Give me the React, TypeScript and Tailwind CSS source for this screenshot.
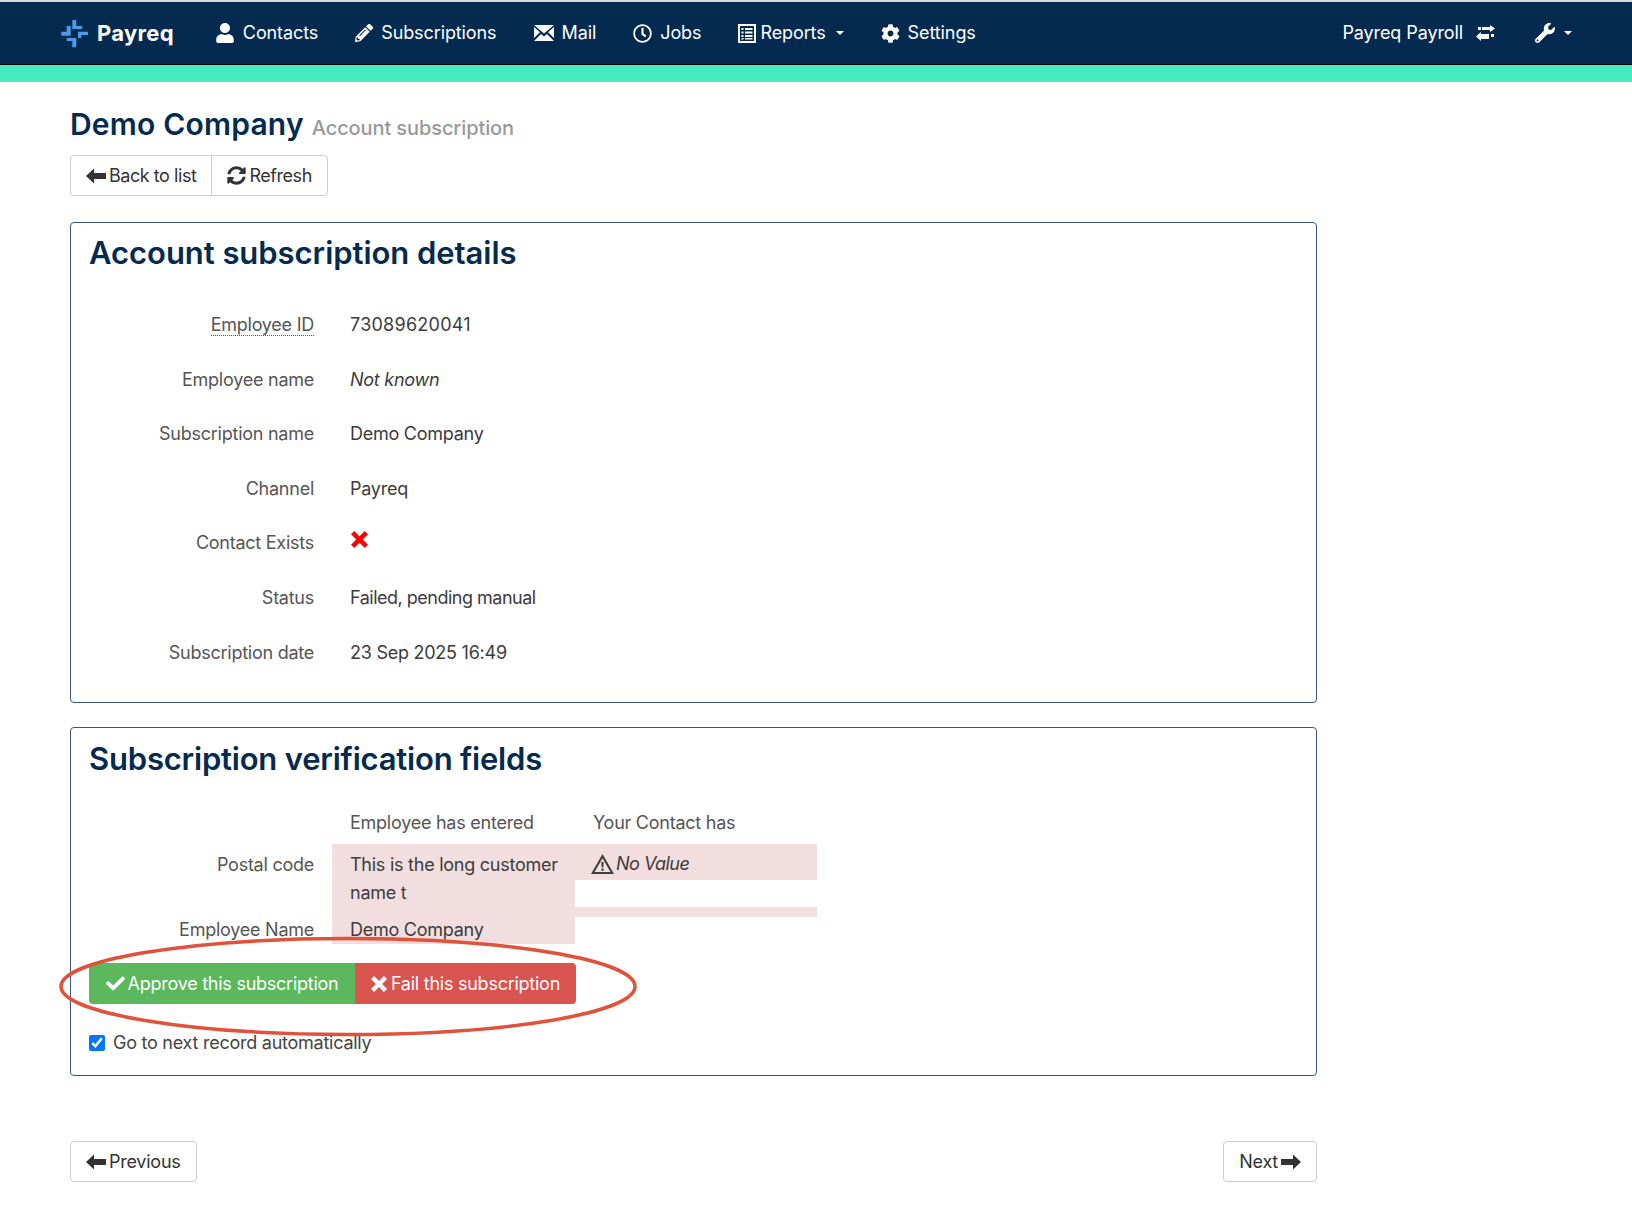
import { FaUser, FaPencilAlt, FaRegClock, FaCog, FaWrench, FaSyncAlt, FaCheck } from "react-icons/fa";

const font = { fontFamily: "Inter, 'Noto Sans', sans-serif" };

function Logo() {
  return (
    <svg width="28" height="29" viewBox="7 4 28 29" fill="#4b9be6">
      <path d="M18.300 5h4v6h6v3h-10z" />
      <path d="M24 16.700h10V20h-6.700v3H24z" />
      <path d="M12.700 23h9.600v9.300h-4V26h-5.600z" />
      <path d="M12.700 11h4v9.700H7.300v-4h5.400z" />
    </svg>
  );
}

function MailIcon() {
  return (
    <svg width="20" height="16" viewBox="0 0 20 16" fill="currentColor">
      <path d="M0 0h20L10 8.500z" />
      <path d="M0 2l6 5.200L0 13z" />
      <path d="M20 2l-6 5.200 6 5.800z" />
      <path d="M0 16l7-7 3 2.500L13 9l7 7z" />
    </svg>
  );
}

function ListIcon() {
  return (
    <svg width="18" height="19" viewBox="0 0 18 19" fill="currentColor">
      <path fillRule="evenodd" d="M0 0h18v19H0zM2 2v15h14V2z" />
      <path d="M3.500 4h2v2h-2zM7 4h7.500v2H7zM3.500 7.500h2v2h-2zM7 7.500h7.500v2H7zM3.500 11h2v2h-2zM7 11h7.500v2H7zM3.500 14h2v1.500h-2zM7 14h7.500v1.500H7z" />
    </svg>
  );
}

function TransferIcon() {
  return (
    <svg width="19" height="16" viewBox="0 0 19 16" fill="currentColor">
      <path d="M6 2h8V0l5 3.500L14 7V5H6z" />
      <path d="M13 9H5V7L0 11.500 5 16v-2h8z" />
      <path d="M2 2h3v3H2zM15 9h3v3h-3z" />
    </svg>
  );
}

function WarnIcon() {
  return (
    <svg width="23" height="20" viewBox="0 0 23 20" fill="#3f3f3f">
      <path fillRule="evenodd" d="M11.500 0L23 20H0zM11.500 4.200L3.500 18h16z" />
      <path d="M10.300 8h2.400l-.4 5.500h-1.600zM10.400 14.500h2.200v2.200h-2.200z" />
    </svg>
  );
}

function ArrowLeft() {
  return (
    <svg width="20" height="16" viewBox="0 0 20 16" fill="currentColor">
      <path d="M0 8l8-7.500V5h12v6H8v4.500z" />
    </svg>
  );
}

function ArrowRight() {
  return (
    <svg width="20" height="16" viewBox="0 0 20 16" fill="currentColor">
      <path d="M20 8l-8-7.500V5H0v6h12v4.500z" />
    </svg>
  );
}

function CrossIcon({ size }: { size: number }) {
  return (
    <svg width={size} height={size} viewBox="0 0 18 18" fill="currentColor">
      <path d="M3.500 0L9 5.500 14.500 0 18 3.500 12.500 9l5.500 5.500-3.500 3.500L9 12.500 3.500 18 0 14.500 5.500 9 0 3.500z" />
    </svg>
  );
}

function Caret() {
  return <span className="ml-[6px] inline-block h-0 w-0 border-x-[4px] border-t-[4px] border-x-transparent border-t-white" />;
}

function NavItem({ icon, label, caret, gap = "gap-2" }: { icon: React.ReactNode; label: string; caret?: boolean; gap?: string }) {
  return (
    <a className={`flex items-center ${gap} text-white`}>
      {icon}
      <span>{label}</span>
      {caret && <Caret />}
    </a>
  );
}

function DetailRow({ label, children, abbr }: { label: string; children: React.ReactNode; abbr?: boolean }) {
  return (
    <div className="flex h-[54.6px] items-start">
      <div className="w-[225px] pt-[2px] text-right text-[#555]">
        <span className={abbr ? "border-b border-dotted border-[#555]" : ""}>{label}</span>
      </div>
      <div className="pl-[36px] pt-[2px] text-[#3c3c3c]">{children}</div>
    </div>
  );
}

function BtnDefault({ children, className = "" }: { children: React.ReactNode; className?: string }) {
  return (
    <button className={`flex h-[41px] items-center gap-[3px] border border-[#ccc] bg-white px-[15px] text-[#333] ${className}`}>
      {children}
    </button>
  );
}

export default function App() {
  return (
    <div className="relative min-h-[1224px] bg-white text-[18px] leading-[28px] tracking-[-0.25px]" style={font}>
      <div className="h-[2px] bg-[#d8d8d8]" />
      <nav className="flex h-[63px] items-center justify-between border-b border-black bg-[#042b4f] pl-[61px] pr-[60px] tracking-[-0.1px]">
        <div className="flex items-center gap-[37px]">
          <div className="mr-[4px] flex items-center gap-[8px] text-[22px] font-bold tracking-[0.3px] text-white">
            <Logo />
            <span>Payreq</span>
          </div>
          <NavItem icon={<FaUser size={20} />} label="Contacts" />
          <NavItem icon={<FaPencilAlt size={18} />} label="Subscriptions" />
          <NavItem icon={<MailIcon />} label="Mail" />
          <NavItem icon={<FaRegClock size={19} />} label="Jobs" />
          <NavItem icon={<ListIcon />} label="Reports" caret gap="gap-[4px]" />
          <NavItem icon={<FaCog size={19} />} label="Settings" />
        </div>
        <div className="flex items-center gap-[40px] text-white">
          <div className="flex items-center gap-[13px]">
            <span>Payreq Payroll</span>
            <TransferIcon />
          </div>
          <div className="flex items-center">
            <FaWrench size={20} className="mr-[3px]" />
            <Caret />
          </div>
        </div>
      </nav>
      <div className="h-[17px] bg-[#45ebbf]" />

      <main className="ml-[70px] w-[1247px] pt-[20px]">
        <h1 className="flex items-baseline gap-[8px] text-[30px] font-semibold leading-[44px] tracking-[0.2px] text-[#042b4f]">
          Demo Company
          <small className="text-[20px] font-medium tracking-[-0.1px] text-[#999]">Account subscription</small>
        </h1>

        <div className="mt-[5px] flex tracking-[-0.45px]">
          <BtnDefault className="rounded-l-[4px]">
            <ArrowLeft />
            Back to list
          </BtnDefault>
          <BtnDefault className="-ml-px rounded-r-[4px]">
            <FaSyncAlt size={19} />
            Refresh
          </BtnDefault>
        </div>

        <section className="mt-[26px] h-[481px] rounded-[4px] border border-[#36587a] px-[18px] pt-[12px]">
          <h2 className="text-[31px] font-semibold leading-[36px] tracking-[-0.05px] text-[#042b4f]">Account subscription details</h2>
          <div className="mt-[38px]">
            <DetailRow label="Employee ID" abbr><span className="tracking-[0.25px]">73089620041</span></DetailRow>
            <DetailRow label="Employee name"><em>Not known</em></DetailRow>
            <DetailRow label="Subscription name">Demo Company</DetailRow>
            <DetailRow label="Channel">Payreq</DetailRow>
            <DetailRow label="Contact Exists">
              <span className="ml-[1px] mt-[2px] block text-[#f00]"><CrossIcon size={17} /></span>
            </DetailRow>
            <DetailRow label="Status"><span className="tracking-[-0.5px]">Failed, pending manual</span></DetailRow>
            <DetailRow label="Subscription date">23 Sep 2025 16:49</DetailRow>
          </div>
        </section>

        <section className="mt-[24px] h-[349px] rounded-[4px] border border-[#36587a] px-[18px] pt-[13px]">
          <h2 className="text-[31px] font-semibold leading-[36px] tracking-[-0.2px] text-[#042b4f]">Subscription verification fields</h2>

          <div className="mt-[32px] grid grid-cols-[243px_243px_242px]">
            <div />
            <div className="pl-[18px] text-[#555]">Employee has entered</div>
            <div className="pl-[18px] text-[#555]">Your Contact has</div>
          </div>

          <div className="mt-[7px] grid grid-cols-[243px_243px_242px]">
            <div className="h-[73px] pr-[18px] pt-[7px] text-right text-[#555]">Postal code</div>
            <div className="h-[73px] bg-[#f2dede] pl-[18px] pt-[7px] text-[#3c3c3c]">This is the long customer name t</div>
            <div className="h-[73px] bg-[#f2dede]">
              <div className="flex h-[36px] items-center gap-[2px] pl-[16px] pt-[4px] text-[#3c3c3c]">
                <WarnIcon />
                <em className="tracking-[-0.5px]">No Value</em>
              </div>
              <div className="h-[27px] bg-white" />
            </div>
            <div className="h-[27px] pr-[18px] text-right leading-[26px] text-[#555]">Employee Name</div>
            <div className="h-[27px] bg-[#f2dede] pl-[18px] leading-[26px] text-[#3c3c3c]">Demo Company</div>
          </div>

          <div className="mt-[19px] flex text-white">
            <button className="flex h-[41px] w-[266px] items-center justify-center gap-[3px] rounded-l-[4px] bg-[#5cb85c]">
              <FaCheck size={19} />
              Approve this subscription
            </button>
            <button className="flex h-[41px] w-[221px] items-center justify-center gap-[4px] rounded-r-[4px] bg-[#d9534f]">
              <CrossIcon size={16} />
              Fail this subscription
            </button>
          </div>

          <label className="mt-[25px] flex items-center gap-[8px] text-[#444]">
            <input type="checkbox" defaultChecked className="h-[16px] w-[16px] accent-[#0075ff]" />
            Go to next record automatically
          </label>
        </section>

        <div className="mt-[65px] flex justify-between">
          <BtnDefault className="rounded-[4px]">
            <ArrowLeft />
            Previous
          </BtnDefault>
          <BtnDefault className="rounded-[4px]">
            Next
            <ArrowRight />
          </BtnDefault>
        </div>
      </main>

      {/* hand-drawn annotation over the buttons */}
      <svg className="pointer-events-none absolute left-[55px] top-[930px]" width="596" height="110" viewBox="0 0 596 110" fill="none">
        <ellipse cx="293" cy="56.500" rx="287" ry="48" stroke="#e0523a" strokeWidth="3.500" />
      </svg>
    </div>
  );
}
